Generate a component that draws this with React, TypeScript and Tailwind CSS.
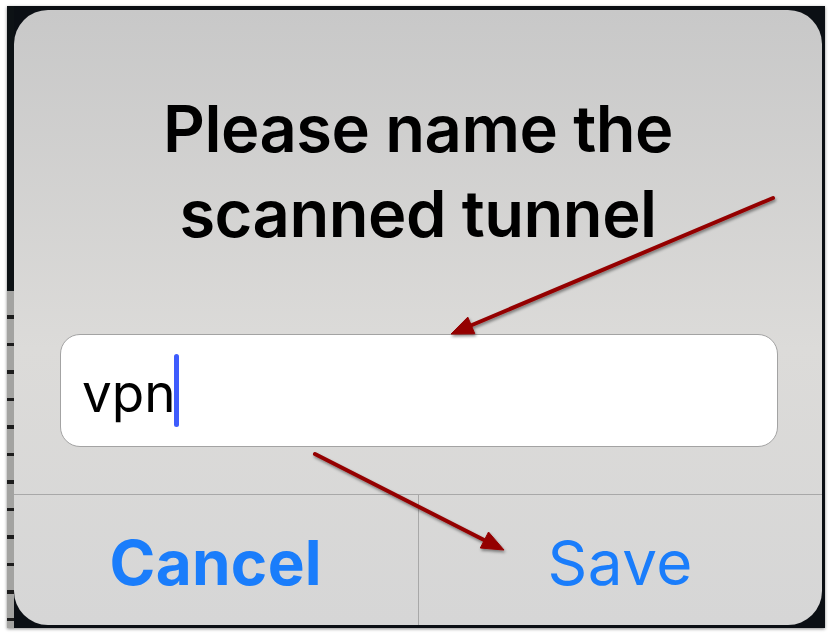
const font = { fontFamily: 'Inter, "Noto Sans", sans-serif' }

function Arrows() {
    return (
        <svg
            className="pointer-events-none absolute inset-0"
            width={831}
            height={637}
            viewBox="0 0 831 637"
        >
            <defs>
                <filter id="arrowShadow" x="-10%" y="-10%" width="120%" height="130%">
                    <feDropShadow dx="1" dy="2" stdDeviation="1.5" floodColor="#000" floodOpacity="0.45" />
                </filter>
            </defs>
            <g filter="url(#arrowShadow)" fill="#940000" stroke="#940000">
                <line x1={773} y1={198} x2={472} y2={325} strokeWidth={4} strokeLinecap="round" />
                <polygon points="451,334 474.8,333.7 467.8,317.1" strokeWidth={1} strokeLinejoin="round" />
                <line x1={315} y1={454} x2={486} y2={541} strokeWidth={4} strokeLinecap="round" />
                <polygon points="504,550 480.3,548 488.5,532" strokeWidth={1} strokeLinejoin="round" />
            </g>
        </svg>
    )
}

export default function App() {
    return (
        <div className="relative h-[637px] w-[831px] bg-white pl-[7px] pt-[6px]" style={font}>
            <div className="flex h-[622px] w-[818px] bg-[#0b0f14] shadow-[0_1px_3px_rgba(0,0,0,0.45)]">
                {/* background photo edge on the left */}
                <div className="flex w-[7px] flex-col">
                    <div className="h-[285px] bg-[#0d1215]" />
                    <div className="flex-1 bg-[repeating-linear-gradient(to_bottom,#a3a3a1_0px,#a3a3a1_24px,#1c1c1c_24px,#1c1c1c_27.5px)]" />
                </div>

                <div className="flex flex-1 flex-col pb-[3px] pr-[3px] pt-[4px]">
                    <div className="flex flex-1 flex-col rounded-[34px] bg-gradient-to-b from-[#c8c8c8] via-[#dcdbd9] via-55% to-[#d6d6d6]">
                        <h1 className="pt-[76px] text-center text-[65px] font-semibold leading-[85px] tracking-[-0.5px] text-black">
                            Please name the
                            <br />
                            scanned tunnel
                        </h1>

                        <div className="ml-[46px] mr-[44px] mt-[78px] flex h-[113px] items-center rounded-[20px] border border-[#a3a3a3] bg-white pl-[21px] pt-[4px]">
                            <span className="text-[53px] leading-[54px] text-black">vpn</span>
                            <span className="ml-[-2px] mt-[-4px] h-[73px] w-[5px] rounded-full bg-[#3e5cfd]" />
                        </div>

                        <div className="mt-[47px] flex flex-1 border-t border-[#a8a8a8]">
                            <button className="flex flex-1 items-center justify-center pt-[6px] text-[62px] font-bold leading-[60px] tracking-[0.3px] text-[#1a7dfb]">
                                Cancel
                            </button>
                            <button className="flex flex-1 items-center justify-center border-l border-[#a8a8a8] pt-[6px] text-[62px] leading-[60px] tracking-[0.5px] text-[#1a7dfb]">
                                Save
                            </button>
                        </div>
                    </div>
                </div>
            </div>
            <Arrows />
        </div>
    )
}
